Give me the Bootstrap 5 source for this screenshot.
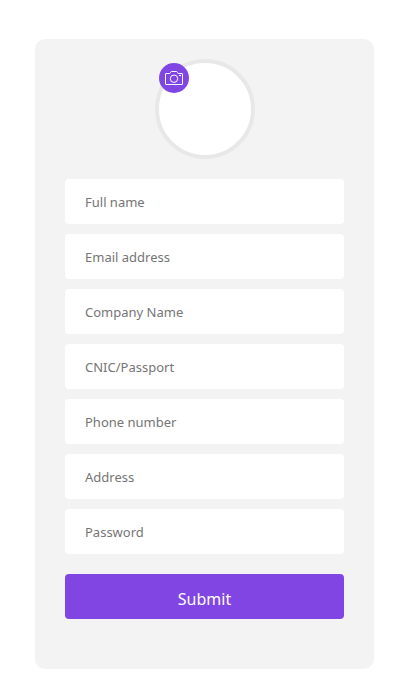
<!DOCTYPE html>
<html lang="en">
<head>
<meta charset="utf-8">
<meta name="viewport" content="width=device-width, initial-scale=1">
<title>Sign up</title>
<link href="https://cdn.jsdelivr.net/npm/bootstrap@5.3.0/dist/css/bootstrap.min.css" rel="stylesheet">
<style>
  body { font-family: "Noto Sans", sans-serif; background: #fff; }
  .page-wrap { padding: 39px 30px 31px 35px; }
  .signup-form { max-width: 540px; padding: 20px 30px 50px; border-radius: 10px; background: #f3f3f3; }
  .avatar { width: 100px; height: 100px; border: 4px solid #e8e8e8; margin-bottom: 20px; }
  .avatar-upload { top: 0; left: 0; width: 30px; height: 30px; background: #8145e4; cursor: pointer; }
  .avatar-upload input { inset: 0; font-size: 0; cursor: pointer; }
  .field-list { gap: 10px; }
  .signup-form .form-control { height: 45px; padding: 0 20px; border-radius: 4px; font-size: 13px; }
  .signup-form .form-control::placeholder { color: #757575; }
  .btn-submit { height: 45px; margin-top: 20px; padding: 5px 0 0; border-radius: 4px; font-size: 16px;
    --bs-btn-color: #fff; --bs-btn-bg: #8145e4; --bs-btn-hover-color: #fff; --bs-btn-hover-bg: #6f35d0;
    --bs-btn-active-color: #fff; --bs-btn-active-bg: #6f35d0; }
</style>
</head>
<body>
<main class="page-wrap">
  <form class="signup-form mx-auto">
    <div class="avatar position-relative rounded-circle bg-white mx-auto">
      <label class="avatar-upload position-absolute rounded-circle overflow-hidden d-flex align-items-center justify-content-center" for="photo">
        <svg width="18" height="14" viewBox="0 0 18 14" fill="none" stroke="#fff" aria-hidden="true">
          <path d="M1 2.5H4.5Q5.2 2.5 5.5 1.5T6.5 .5H11.5Q12.2 .5 12.5 1.5T13.5 2.5H17Q17.5 2.5 17.5 3V13Q17.5 13.5 17 13.5H1Q.5 13.5 .5 13V3Q.5 2.5 1 2.5Z"/>
          <circle cx="9" cy="7.7" r="3.7"/>
          <path d="M14 4.5H16"/>
        </svg>
        <input class="position-absolute w-100 h-100 opacity-0" type="file" id="photo" accept="image/*" aria-label="Upload photo">
      </label>
    </div>
    <div class="field-list d-flex flex-column">
      <input class="form-control border-0" type="text" placeholder="Full name" aria-label="Full name">
      <input class="form-control border-0" type="email" placeholder="Email address" aria-label="Email address">
      <input class="form-control border-0" type="text" placeholder="Company Name" aria-label="Company Name">
      <input class="form-control border-0" type="text" placeholder="CNIC/Passport" aria-label="CNIC/Passport">
      <input class="form-control border-0" type="tel" placeholder="Phone number" aria-label="Phone number">
      <input class="form-control border-0" type="text" placeholder="Address" aria-label="Address">
      <input class="form-control border-0" type="password" placeholder="Password" aria-label="Password">
    </div>
    <button class="btn btn-submit border-0 w-100 d-block" type="submit">Submit</button>
  </form>
</main>
<script src="https://cdn.jsdelivr.net/npm/bootstrap@5.3.0/dist/js/bootstrap.bundle.min.js"></script>
</body>
</html>
